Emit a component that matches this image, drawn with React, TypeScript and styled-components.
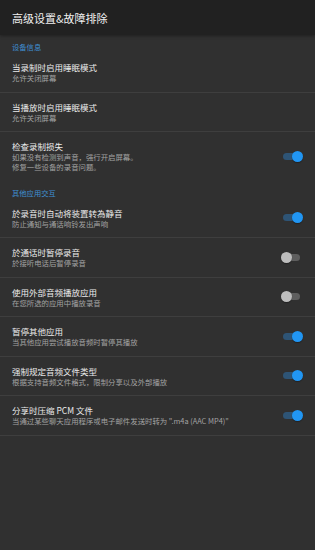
import React from "react";
import styled, { createGlobalStyle } from "styled-components";

const Global = createGlobalStyle`
  html, body { margin: 0; padding: 0; background: #303030; }
  body { font-family: "Noto Sans CJK SC", "Noto Sans", Roboto, sans-serif; }
  * { box-sizing: border-box; }
`;

const Page = styled.div`
  width: 315px;
  height: 550px;
  background: #303030;
  display: flex;
  flex-direction: column;
`;

const Toolbar = styled.header`
  height: 35px;
  background: #212121;
  display: flex;
  align-items: center;
  padding: 0 12px;
  color: #f0f0f0;
  font-size: 11px;
  box-shadow: 0 1px 3px rgba(0,0,0,0.35);
`;

const SectionTitle = styled.div`
  padding: 8px 12px 0;
  height: 17px;
  line-height: 9px;
  font-size: 7.3px;
  color: #3f8fd2;
`;

const Row = styled.div<{ $divider: boolean }>`
  display: flex;
  align-items: center;
  padding: 9px 12.5px 8.5px 12px;
  border-bottom: ${(p) => (p.$divider ? "1px solid #3e3e3e" : "1px solid transparent")};
  margin-bottom: -1px;
`;

const Texts = styled.div`
  flex: 1;
  display: flex;
  flex-direction: column;
`;

const Title = styled.div`
  font-size: 8.5px;
  line-height: 12px;
  color: #ececec;
`;

const Sub = styled.div`
  font-size: 7.4px;
  line-height: 10px;
  color: #a2a2a2;
  white-space: pre-line;
`;

const Switch = styled.div<{ $on: boolean }>`
  position: relative;
  width: 22px;
  height: 11px;
  flex: none;
`;

const Track = styled.div<{ $on: boolean }>`
  position: absolute;
  left: 2.5px;
  top: 2px;
  width: 17px;
  height: 7px;
  border-radius: 4px;
  background: ${(p) => (p.$on ? "#2e5475" : "#5e5e5e")};
`;

const Thumb = styled.div<{ $on: boolean }>`
  position: absolute;
  top: 0;
  left: ${(p) => (p.$on ? "11px" : "0")};
  width: 11px;
  height: 11px;
  border-radius: 50%;
  background: ${(p) => (p.$on ? "#2196f3" : "#bdbdbd")};
  box-shadow: 0 1px 1px rgba(0,0,0,0.3);
`;

type Item = { title: string; sub: string; toggle?: boolean; divider: boolean };

const Toggle = ({ on }: { on: boolean }) => (
  <Switch $on={on}>
    <Track $on={on} />
    <Thumb $on={on} />
  </Switch>
);

const SettingRow = ({ item }: { item: Item }) => (
  <Row $divider={item.divider}>
    <Texts>
      <Title>{item.title}</Title>
      <Sub>{item.sub}</Sub>
    </Texts>
    {item.toggle !== undefined && <Toggle on={item.toggle} />}
  </Row>
);

const section1: Item[] = [
  { title: "当录制时启用睡眠模式", sub: "允许关闭屏幕", divider: true },
  { title: "当播放时启用睡眠模式", sub: "允许关闭屏幕", divider: true },
  {
    title: "检查录制损失",
    sub: "如果没有检测到声音，强行开启屏幕。\n修复一些设备的录音问题。",
    toggle: true,
    divider: false,
  },
];

const section2: Item[] = [
  { title: "於录音时自动将装置转為静音", sub: "防止通知与通话响铃发出声响", toggle: true, divider: true },
  { title: "於通话时暂停录音", sub: "於接听电话后暂停录音", toggle: false, divider: true },
  { title: "使用外部音频播放应用", sub: "在您所选的应用中播放录音", toggle: false, divider: true },
  { title: "暂停其他应用", sub: "当其他应用尝试播放音频时暂停其播放", toggle: true, divider: true },
  { title: "强制规定音频文件类型", sub: "根据支持音频文件格式，限制分享以及外部播放", toggle: true, divider: true },
  {
    title: "分享时压缩 PCM 文件",
    sub: "当通过某些聊天应用程序或电子邮件发送时转为 \".m4a (AAC MP4)\"",
    toggle: true,
    divider: true,
  },
];

export default function App() {
  return (
    <Page>
      <Global />
      <Toolbar>高级设置&amp;故障排除</Toolbar>
      <SectionTitle>设备信息</SectionTitle>
      {section1.map((it) => (
        <SettingRow key={it.title} item={it} />
      ))}
      <SectionTitle>其他应用交互</SectionTitle>
      {section2.map((it) => (
        <SettingRow key={it.title} item={it} />
      ))}
    </Page>
  );
}
